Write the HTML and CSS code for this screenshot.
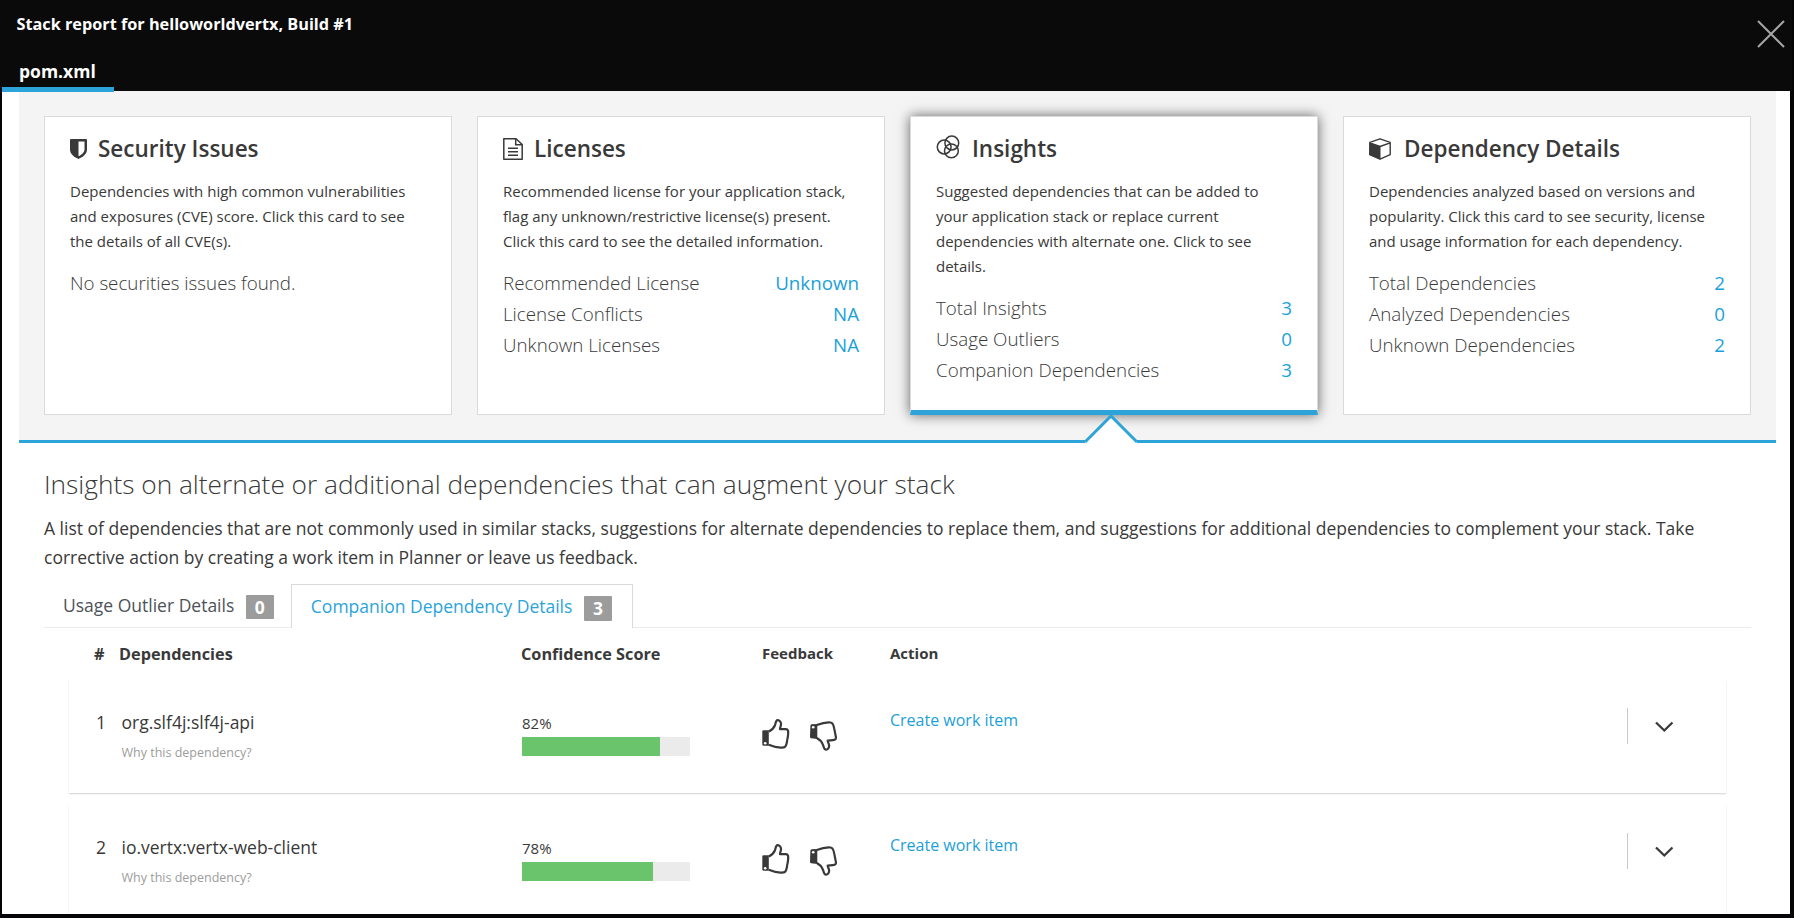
FILE: index.html
```html
<!DOCTYPE html>
<html lang="en">
<head>
<meta charset="utf-8">
<title>Stack report</title>
<link rel="stylesheet" href="styles.css">
</head>
<body>
<svg width="0" height="0" class="defs">
  <symbol id="thumb-up" viewBox="0 0 28 30">
    <path class="solid" d="M1.600 11.300H6.800V26.700H1.600Q.3 26.700.3 25.300V12.600Q.3 11.300 1.600 11.300Z"/>
    <circle class="dot" cx="3.200" cy="24.200" r="1.300"/>
    <path class="line" d="M6.800 12.600C9.600 11.200 11.900 8.800 13 6.200C13.600 4.500 13.700 1.400 15.600 1.200C17.500 1.100 19.200 3 19 5.400C18.900 7.500 17.800 8.800 18 10.200H23.600C25.600 10.200 26.500 11.500 26.100 13.200C26.400 14.900 25.900 16.300 25.800 18C25.500 19.700 25.200 20.700 25 22.500C24.500 25.200 24.200 28.300 21.500 28.300C16 29.200 11.500 27.800 6.800 25.800"/>
  </symbol>
  <symbol id="thumb-down" viewBox="0 0 28 30">
    <path class="solid" d="M2.600 3.300L8.300 3V18L2.100 17.300Q.9 17 1 15.800L1.400 4.600Q1.500 3.400 2.600 3.300Z"/>
    <circle class="dot" cx="4.200" cy="6.200" r="1.300"/>
    <path class="line" d="M7.800 4C12.500 2.200 17 1.100 21.500 1.500C24.300 1.800 24.700 4.600 25.200 7.500C25.800 9.500 25.700 11 26.300 12.800C26.400 14.500 27.200 15.800 26.900 17.300C26.500 19 25.300 19.200 23.700 19.200L18.700 19.600C18.600 21 19.900 22.200 20.100 24.300C20.300 26.700 18.900 28.600 17 28.700C15 28.700 14.800 26 14.100 24.100C13 21.200 10.800 18.600 7.800 17.100"/>
  </symbol>
  <symbol id="chevron" viewBox="0 0 18 12">
    <path class="stroke" d="M1 1.500L9.300 9.500L17.500 1.500"/>
  </symbol>
</svg>

<div class="overlay">
  <header class="header">
    <h1 class="header-title">Stack report for helloworldvertx, Build #1</h1>
    <svg class="close" viewBox="0 0 28 28"><path d="M1 1L27 27M27 1L1 27"/></svg>
    <div class="file-tab">pom.xml</div>
  </header>

  <main class="report">
    <section class="cards">
      <article class="card">
        <h2 class="card-title">
          <span class="card-icon shield"><svg width="17" height="20" viewBox="0 0 17 20"><path fill="#393939" fill-rule="evenodd" d="M1 0H16Q17 0 17 1V10.500C17 15.500 12 18.500 8.500 20C5 18.500 0 15.500 0 10.500V1Q0 0 1 0ZM8.500 2.500V17.200C11.500 15.800 14.500 13.500 14.500 10.500V2.500Z"/></svg></span>Security Issues</h2>
        <p class="card-text">Dependencies with high common vulnerabilities and exposures (CVE) score. Click this card to see the details of all CVE(s).</p>
        <div class="stat"><span>No securities issues found.</span></div>
      </article>

      <article class="card">
        <h2 class="card-title">
          <span class="card-icon file"><svg width="20" height="22" viewBox="0 0 20 22"><g fill="none" stroke="#393939" stroke-width="1.500"><path d="M.8 .8H13L19.200 6.500V21.200H.8Z" stroke-linejoin="round"/><path d="M12.700 .8V6.700H19"/><path d="M5 10.300H15M5 13.700H15M5 17.200H15"/></g></svg></span>Licenses</h2>
        <p class="card-text">Recommended license for your application stack, flag any unknown/restrictive license(s) present. Click this card to see the detailed information.</p>
        <div class="stat"><span>Recommended License</span><b>Unknown</b></div>
        <div class="stat"><span>License Conflicts</span><b>NA</b></div>
        <div class="stat"><span>Unknown Licenses</span><b>NA</b></div>
      </article>

      <article class="card selected">
        <h2 class="card-title">
          <span class="card-icon rings"><svg width="24" height="24" viewBox="0 0 24 24"><g fill="none" stroke="#393939" stroke-width="1.500"><circle cx="8.200" cy="12" r="6.900"/><circle cx="15.800" cy="8" r="6.900"/><circle cx="15.400" cy="15.900" r="6.900"/></g></svg></span>Insights</h2>
        <p class="card-text">Suggested dependencies that can be added to your application stack or replace current dependencies with alternate one. Click to see details.</p>
        <div class="stat"><span>Total Insights</span><b>3</b></div>
        <div class="stat"><span>Usage Outliers</span><b>0</b></div>
        <div class="stat"><span>Companion Dependencies</span><b>3</b></div>
        <svg class="pointer" viewBox="0 0 54 30"><path class="pointer-fill" d="M1 30V27.500L27 1.500L53 27.500V30Z"/><path class="pointer-line" d="M1 28L27 2L53 28"/></svg>
      </article>

      <article class="card">
        <h2 class="card-title">
          <span class="card-icon cube"><svg width="22" height="22" viewBox="0 0 22 22"><path fill="none" stroke="#393939" stroke-width="1.400" stroke-linejoin="round" d="M11 .8L21.200 4.300V16.700L11 21.200L.8 16.700V4.300ZM.8 4.800L11 8.500L21.200 4.800"/><path fill="#393939" d="M.5 4.800L11.500 8.600V21.500L.5 17Z"/></svg></span>Dependency Details</h2>
        <p class="card-text">Dependencies analyzed based on versions and popularity. Click this card to see security, license and usage information for each dependency.</p>
        <div class="stat"><span>Total Dependencies</span><b>2</b></div>
        <div class="stat"><span>Analyzed Dependencies</span><b>0</b></div>
        <div class="stat"><span>Unknown Dependencies</span><b>2</b></div>
      </article>
    </section>

    <section class="details">
      <h2 class="details-title">Insights on alternate or additional dependencies that can augment your stack</h2>
      <p class="details-text">A list of dependencies that are not commonly used in similar stacks, suggestions for alternate dependencies to replace them, and suggestions for additional dependencies to complement your stack. Take corrective action by creating a work item in Planner or leave us feedback.</p>

      <nav class="tabs">
        <a class="tab">Usage Outlier Details<span class="badge">0</span></a>
        <a class="tab active">Companion Dependency Details<span class="badge">3</span></a>
      </nav>

      <div class="list">
        <div class="columns list-head">
          <span class="head-index">#</span>
          <span class="head-name">Dependencies</span>
          <span class="head-score">Confidence Score</span>
          <span class="small">Feedback</span>
          <span class="small">Action</span>
        </div>

        <div class="columns row">
          <span class="index">1</span>
          <div class="name">org.slf4j:slf4j-api<small>Why this dependency?</small></div>
          <div class="score">82%<div class="bar"><div class="bar-fill" style="width:82%"></div></div></div>
          <div class="feedback"><svg class="up"><use href="#thumb-up"/></svg><svg class="down"><use href="#thumb-down"/></svg></div>
          <a class="action">Create work item</a>
          <div class="expand"><svg><use href="#chevron"/></svg></div>
        </div>

        <div class="columns row">
          <span class="index">2</span>
          <div class="name">io.vertx:vertx-web-client<small>Why this dependency?</small></div>
          <div class="score">78%<div class="bar"><div class="bar-fill" style="width:78%"></div></div></div>
          <div class="feedback"><svg class="up"><use href="#thumb-up"/></svg><svg class="down"><use href="#thumb-down"/></svg></div>
          <a class="action">Create work item</a>
          <div class="expand"><svg><use href="#chevron"/></svg></div>
        </div>
      </div>
    </section>
  </main>
</div>
</body>
</html>
```
FILE: styles.css
```css
* { box-sizing: border-box; }

body {
  margin: 0;
  background: #050507;
  color: #393939;
  font-family: "Open Sans", sans-serif;
  font-size: 15px;
  overflow: hidden;
}

h1, h2, p { margin: 0; }

.defs { position: absolute; }

.overlay {
  display: flex;
  flex-direction: column;
  height: 918px;
  padding: 0 4px 4px 2px;
}

/* header */
.header {
  display: grid;
  grid-template-columns: 1fr auto;
  grid-template-rows: 52px 39px;
  height: 91px;
  margin: 0 -2px;
  padding: 0 2px;
  background: #0a0a0a;
  color: #fff;
}

.header-title {
  padding: 12px 0 0 14.500px;
  font-size: 16.250px;
  font-weight: 700;
  line-height: 24px;
}

.close {
  width: 28px;
  height: 28px;
  margin: 20px 5px 0 0;
  fill: none;
  stroke: #a5a5a5;
  stroke-width: 2;
}

.file-tab {
  z-index: 1;
  width: 112px;
  height: 40px;
  padding: 7px 0 0 17px;
  border-bottom: 5px solid #2ca4da;
  font-size: 17.500px;
  font-weight: 700;
  line-height: 25px;
}

.report {
  flex: 1;
  min-height: 0;
  overflow: hidden;
  background: #fff;
}

/* summary cards */
.cards {
  display: grid;
  grid-template-columns: repeat(4, 408px);
  gap: 25px;
  height: 352px;
  width: 1757px;
  margin-left: 17px;
  padding: 25px;
  background: #f4f4f4;
  border-bottom: 3px solid #2ca4da;
}

.card {
  position: relative;
  height: 299px;
  padding: 18px 25px 0;
  background: #fff;
  border: 1px solid #dadada;
}

.card.selected {
  border-bottom: 5px solid #2ca4da;
  box-shadow: 0 0 12px rgba(0, 0, 0, .6);
}

.card-title {
  display: flex;
  height: 27px;
  margin-bottom: 17px;
  font-size: 22.500px;
  font-weight: 600;
  line-height: 27px;
}

.card-icon { line-height: 0; }
.shield { width: 28px; padding-top: 4px; }
.file { width: 31px; padding-top: 3px; }
.rings { width: 36px; }
.cube { width: 35px; padding-top: 3px; }

.card-text {
  margin-bottom: 13px;
  font-size: 15px;
  line-height: 25px;
}

.stat {
  display: flex;
  justify-content: space-between;
  font-size: 18.750px;
  font-weight: 300;
  line-height: 31px;
}

.stat b {
  font-weight: 400;
  color: #1ba1d8;
}

.pointer {
  position: absolute;
  left: 173px;
  top: 297px;
  width: 54px;
  height: 30px;
}

.pointer-fill { fill: #fff; }
.pointer-line { fill: none; stroke: #2ca4da; stroke-width: 3; }

/* insight details */
.details { padding: 23px 39px 0 42px; }

.details-title {
  font-size: 26.250px;
  font-weight: 300;
  line-height: 36px;
}

.details-text {
  margin-top: 12px;
  font-size: 17.500px;
  line-height: 29px;
}

.tabs {
  display: flex;
  height: 44px;
  margin-top: 12px;
  border-bottom: 1px solid #ebebeb;
}

.tab {
  display: flex;
  height: 43px;
  padding: 8px 17px 0 19px;
  font-size: 17.500px;
  line-height: 26px;
  color: #4d5258;
}

.tab.active {
  height: 44px;
  padding: 8px 20px 0 19px;
  background: #fff;
  border: 1px solid #dadada;
  border-bottom: 0;
  color: #2ca4da;
}

.badge {
  height: 24px;
  margin: 3px 0 0 12px;
  padding: 0 9px 0 8.500px;
  border-radius: 1px;
  background: #9c9c9c;
  color: #fff;
  font-weight: 700;
  line-height: 25px;
}

.active .badge { height: 25px; }

/* dependency list */
.list { padding: 0 25px; }

.columns {
  display: grid;
  grid-template-columns: 49px 404px 240px 128px 1fr 100px;
}

.list-head {
  height: 52px;
  padding-top: 14px;
  font-size: 16.250px;
  font-weight: 700;
  line-height: 24px;
}

.head-index { padding-left: 25px; }
.head-name { padding-left: 1px; }
.head-score { margin-left: -1px; }
.small { margin-top: -1px; font-size: 15px; }

.row {
  height: 113px;
  margin-bottom: 12px;
  background: #fff;
  box-shadow: 0 1.250px 1.250px rgba(3, 3, 3, .175);
}

.index {
  padding: 29px 0 0 27px;
  font-size: 17.500px;
  line-height: 26px;
}

.name {
  padding: 29px 0 0 3.500px;
  font-size: 17.500px;
  line-height: 26px;
}

.name small {
  display: block;
  margin-top: 9px;
  color: #9c9c9c;
  font-size: 12.500px;
  line-height: 18px;
}

.score {
  padding: 32px 0 0;
  line-height: 22px;
}

.bar {
  width: 168px;
  height: 19px;
  margin-top: 3px;
  background: #ebebeb;
}

.bar-fill { height: 100%; background: #6ac46b; }

.feedback { display: flex; padding-top: 39px; }
.feedback svg { width: 28px; height: 30px; }
.feedback .down { margin: 2px 0 0 19px; }

.solid { fill: #393939; }
.dot { fill: #fff; }
.line {
  fill: none;
  stroke: #393939;
  stroke-width: 2.200;
  stroke-linejoin: round;
}

.action {
  padding-top: 28px;
  font-size: 16px;
  line-height: 24px;
  color: #1ba1d8;
}

.expand {
  height: 36px;
  margin: 28px 0 0 1px;
  padding: 13px 0 0 27px;
  border-left: 1px solid #c8c8c8;
  line-height: 0;
}

.expand svg { width: 18px; height: 12px; }
.stroke { fill: none; stroke: #393939; stroke-width: 2.300; }
```
